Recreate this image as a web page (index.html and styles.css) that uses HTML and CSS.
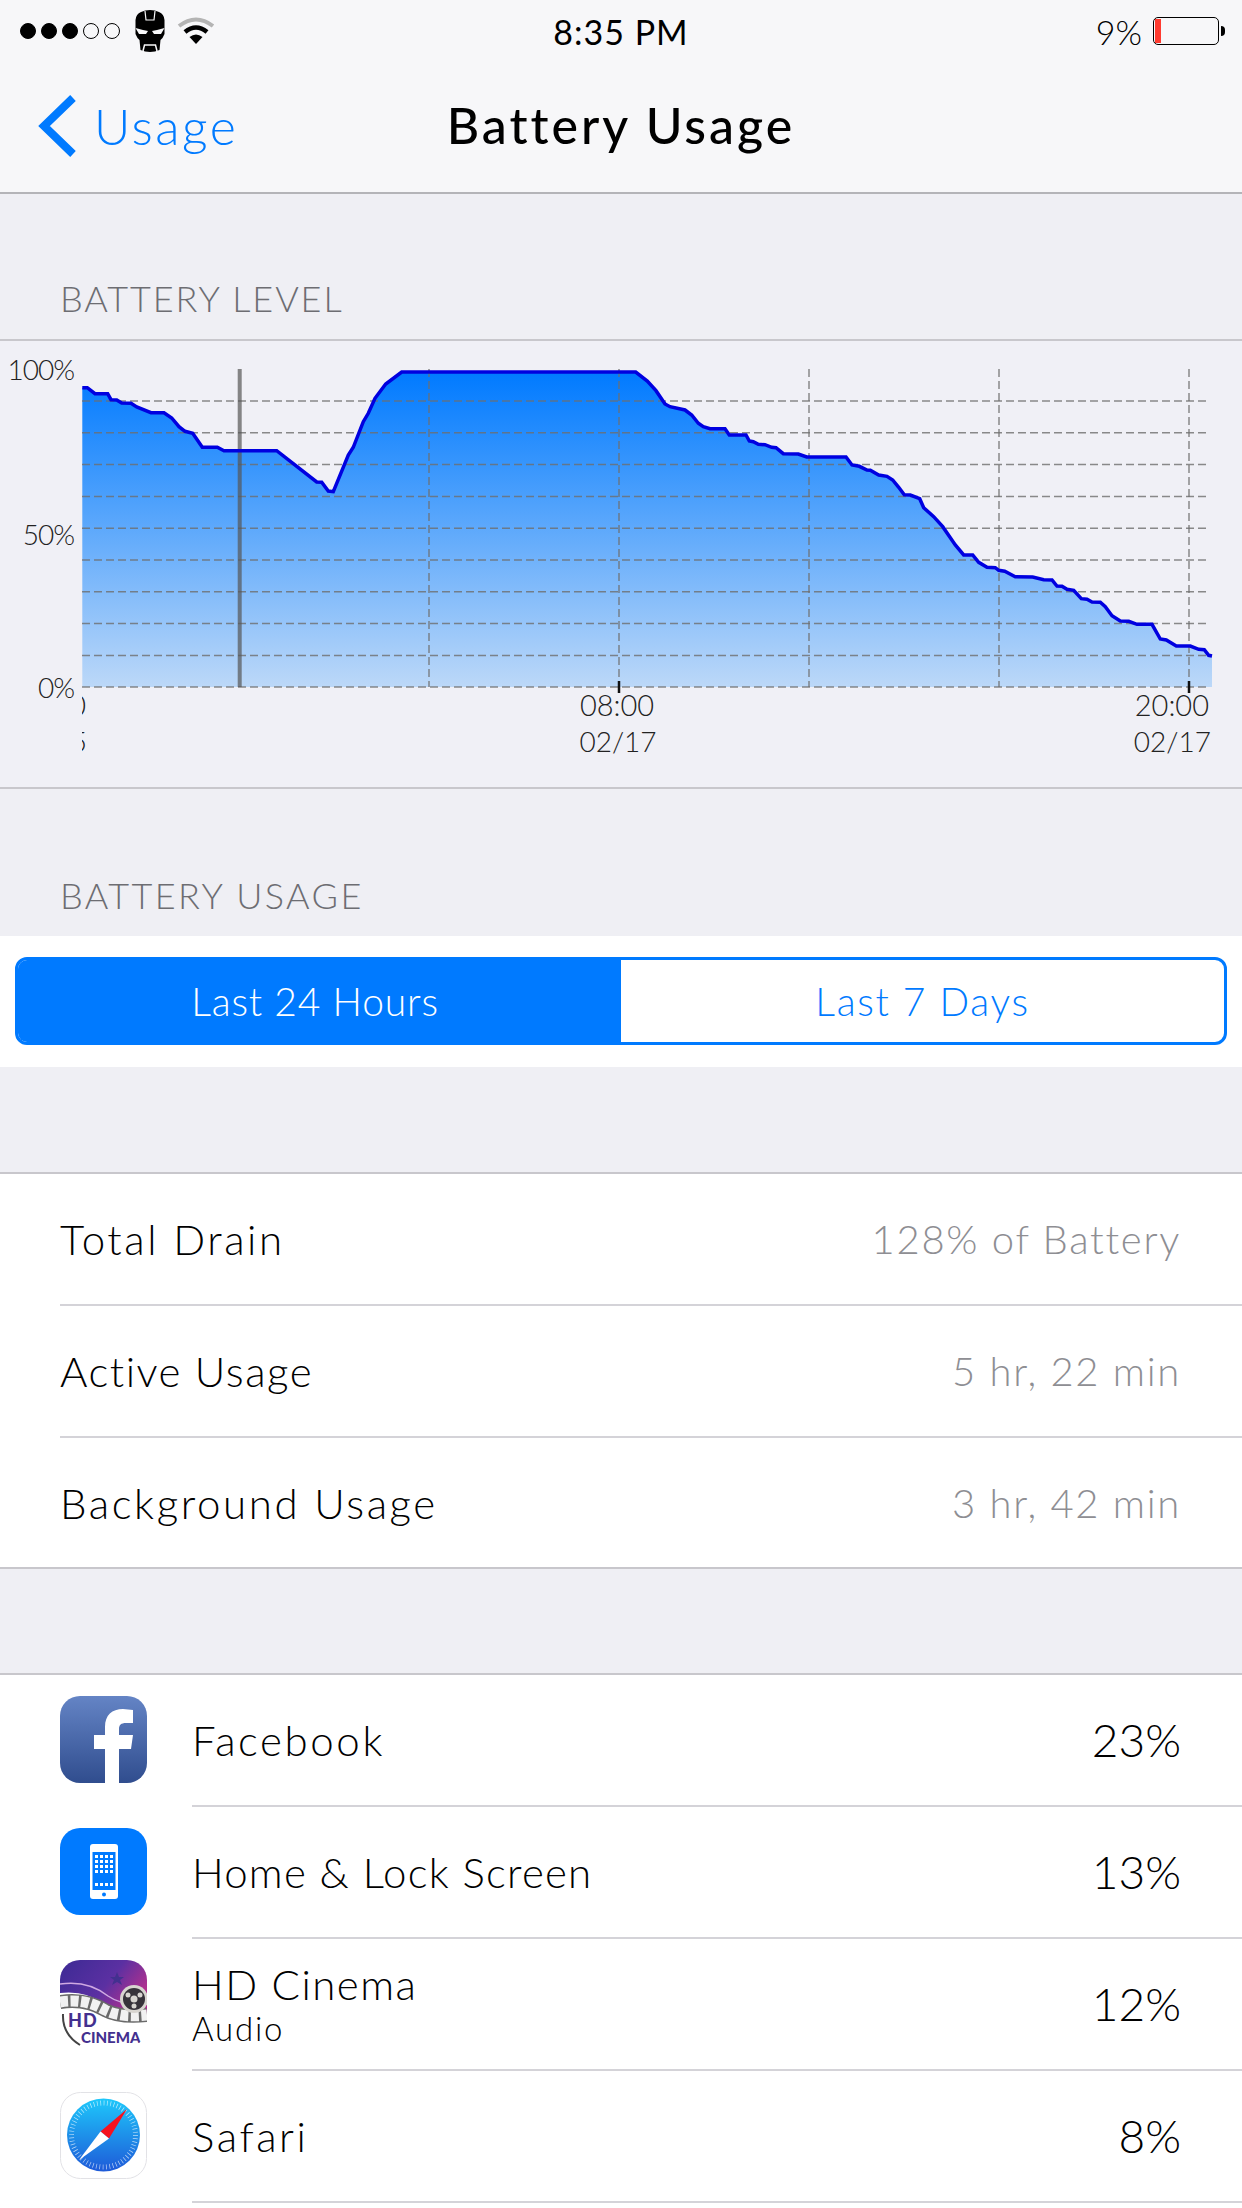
FILE: index.html
```html
<!DOCTYPE html>
<html lang="en">
<head>
    <meta charset="UTF-8">
    <meta name="viewport" content="width=device-width, initial-scale=1.0">
    <title>Battery Usage</title>
    <link rel="stylesheet" href="styles.css">
</head>
<body>
    <div class="screen">
        <!-- Status bar and navigation -->
        <header class="top-bar">
            <div class="status-bar">
                <div class="status-left">
                    <div class="signal">
                        <span class="dot on"></span><span class="dot on"></span><span class="dot on"></span><span class="dot"></span><span class="dot"></span>
                    </div>
                    <svg class="helmet" viewBox="0 0 30 42">
                        <path fill="#000" d="M6 2 Q10 0 15 0 Q20 0 24 2 Q29 4 29.5 10 V24 L27.5 28 L25.5 30 L24.5 40 Q20 42 15 42 Q10 42 5.5 40 L4.5 30 L2.5 28 L.5 24 V10 Q1 4 6 2Z"/>
                        <path fill="none" stroke="#f7f7f9" stroke-width="1.2" d="M10 1 L11 10 H19 L20 1"/>
                        <path fill="#f7f7f9" d="M.5 18 L8 20 L13 21 L11 24 L4 24 Z M29.5 18 L22 20 L17 21 L19 24 L26 24 Z"/>
                        <path fill="none" stroke="#f7f7f9" stroke-width="1.5" d="M8 41 L9.5 35 H20.5 L22 41"/>
                    </svg>
                    <svg class="wifi" viewBox="0 0 38 28">
                        <path fill="none" stroke="#b4b4b4" stroke-width="4" d="M2 10 Q19 -3 36 10"/>
                        <path fill="none" stroke="#000" stroke-width="4.5" d="M8 16 Q19 7 30 16"/>
                        <path fill="#000" d="M12.5 21 Q19 16 25.5 21 L19 28Z"/>
                    </svg>
                </div>
                <div class="status-time">8:35 PM</div>
                <div class="status-right">
                    <span class="status-percent">9%</span>
                    <div class="battery"><div class="battery-fill"></div></div>
                    <div class="battery-nub"></div>
                </div>
            </div>
            <div class="nav-row">
                <div class="nav-back">
                    <svg class="chevron" viewBox="0 0 40 64">
                        <path fill="none" stroke="#007aff" stroke-width="8" d="M36 4 L7 32 L36 60"/>
                    </svg>
                    <span>Usage</span>
                </div>
                <div class="nav-title">Battery Usage</div>
            </div>
        </header>

        <div class="section-label">BATTERY LEVEL</div>

        <!-- Battery level chart, coordinates are screen pixels -->
        <div class="chart-panel">
            <svg class="chart" viewBox="0 341 1242 446">
                <defs>
                    <linearGradient id="areaFill" x1="0" y1="0" x2="0" y2="1">
                        <stop offset="0" stop-color="#007aff"/>
                        <stop offset="1" stop-color="#bcd8f8"/>
                    </linearGradient>
                    <clipPath id="plotClip"><rect x="82" y="680" width="300" height="100"/></clipPath>
                </defs>
                <path fill="url(#areaFill)" d="M82.3 687 V387.7 L87.3 387.7 95 393.7 107.7 393.7 111 399.7 116.7 400 121.7 403 131 403.3 136.7 407 151 412.7 164 412.7 171.7 418 179 426.7 185 431.3 192.7 433.3 202.3 447.3 217.3 447.3 224 450.7 276.7 450.7 316.7 482 321.7 482.3 328.3 491 333.3 491.7 348.3 455 353.3 447.3 363.3 421.7 368.3 413.3 375 398.3 385.7 384 401.7 372 635.7 372 647.3 381 656 390.7 665 404 670 406.7 685 410 691.7 415 698.3 423.3 703.3 426.7 710 428.7 725 428.7 729.3 435 746 435 749.3 441 753.3 441.7 758.3 444.3 765 444.7 771.7 447.3 776 447.7 783.3 453.7 798.3 454 806.7 457 846 457 852 465 859.3 466.3 867 470 870.3 470.3 878.7 475 887 476.3 892.7 480 898.7 487.3 904.3 494.7 910.3 495 919.7 498.7 923.7 507.7 933.7 516.7 942.7 526.7 955.3 545 963.7 555 972.7 555 978.7 562.3 987 567.3 995.3 567.7 998.7 570.3 1004.7 571.3 1015.3 576.7 1032.7 577 1043.7 579.7 1052 580 1057 586 1062 586.3 1067 589.3 1073.7 590.3 1081.3 598.7 1087 599.3 1092 602 1100.3 602.3 1105.3 606.7 1112 615.7 1120.3 621 1128.7 621.3 1137 624.3 1152 624.3 1160.3 639 1166.3 640 1176.3 646 1190.3 646 1198.7 649.3 1204.3 649.7 1208.7 655.3 1212 656 V687 Z"/>
                <g class="grid-lines">
                    <path d="M82 401 H1207 M82 432.8 H1207 M82 464.6 H1207 M82 496.4 H1207 M82 528.2 H1207 M82 560 H1207 M82 591.8 H1207 M82 623.6 H1207 M82 655.4 H1207 M82 687 H1207"/>
                    <path d="M429 369 V687 M619 369 V687 M809 369 V687 M999 369 V687 M1189 369 V687"/>
                </g>
                <path class="cursor-line" d="M239.7 369 V687"/>
                <path class="level-line" d="M82.3 387.7 L87.3 387.7 95 393.7 107.7 393.7 111 399.7 116.7 400 121.7 403 131 403.3 136.7 407 151 412.7 164 412.7 171.7 418 179 426.7 185 431.3 192.7 433.3 202.3 447.3 217.3 447.3 224 450.7 276.7 450.7 316.7 482 321.7 482.3 328.3 491 333.3 491.7 348.3 455 353.3 447.3 363.3 421.7 368.3 413.3 375 398.3 385.7 384 401.7 372 635.7 372 647.3 381 656 390.7 665 404 670 406.7 685 410 691.7 415 698.3 423.3 703.3 426.7 710 428.7 725 428.7 729.3 435 746 435 749.3 441 753.3 441.7 758.3 444.3 765 444.7 771.7 447.3 776 447.7 783.3 453.7 798.3 454 806.7 457 846 457 852 465 859.3 466.3 867 470 870.3 470.3 878.7 475 887 476.3 892.7 480 898.7 487.3 904.3 494.7 910.3 495 919.7 498.7 923.7 507.7 933.7 516.7 942.7 526.7 955.3 545 963.7 555 972.7 555 978.7 562.3 987 567.3 995.3 567.7 998.7 570.3 1004.7 571.3 1015.3 576.7 1032.7 577 1043.7 579.7 1052 580 1057 586 1062 586.3 1067 589.3 1073.7 590.3 1081.3 598.7 1087 599.3 1092 602 1100.3 602.3 1105.3 606.7 1112 615.7 1120.3 621 1128.7 621.3 1137 624.3 1152 624.3 1160.3 639 1166.3 640 1176.3 646 1190.3 646 1198.7 649.3 1204.3 649.7 1208.7 655.3 1212 656"/>
                <path class="tick" d="M619 681 V693 M1189 681 V693"/>
                <text class="axis-text percent" x="74" y="380" text-anchor="end">100%</text>
                <text class="axis-text percent" x="74" y="545" text-anchor="end">50%</text>
                <text class="axis-text percent" x="74" y="698" text-anchor="end">0%</text>
                <g clip-path="url(#plotClip)">
                    <text class="axis-text" x="86" y="716" text-anchor="end">0</text>
                    <text class="axis-text date" x="87" y="752" text-anchor="end">5</text>
                </g>
                <text class="axis-text" x="617" y="716" text-anchor="middle">08:00</text>
                <text class="axis-text date" x="618" y="752" text-anchor="middle">02/17</text>
                <text class="axis-text" x="1209" y="716" text-anchor="end">20:00</text>
                <text class="axis-text date" x="1211" y="752" text-anchor="end">02/17</text>
            </svg>
        </div>

        <div class="section-label lower">BATTERY USAGE</div>

        <div class="segment-band">
            <div class="segmented">
                <div class="segment active">Last 24 Hours</div>
                <div class="segment">Last 7 Days</div>
            </div>
        </div>

        <!-- Totals -->
        <div class="table totals">
            <div class="row">
                <div class="row-body"><span class="row-name wide">Total Drain</span><span class="row-value">128% of Battery</span></div>
            </div>
            <div class="row">
                <div class="row-body"><span class="row-name">Active Usage</span><span class="row-value">5 hr, 22 min</span></div>
            </div>
            <div class="row">
                <div class="row-body"><span class="row-name wide">Background Usage</span><span class="row-value">3 hr, 42 min</span></div>
            </div>
        </div>

        <!-- Apps -->
        <div class="table apps">
            <div class="row">
                <svg class="app-icon" viewBox="0 0 87 87">
                    <defs>
                        <linearGradient id="fbFill" x1="0" y1="0" x2="0" y2="1">
                            <stop offset="0" stop-color="#6484c5"/>
                            <stop offset="1" stop-color="#304d8e"/>
                        </linearGradient>
                        <clipPath id="iconClip"><rect width="87" height="87" rx="20"/></clipPath>
                    </defs>
                    <rect width="87" height="87" rx="20" fill="url(#fbFill)"/>
                    <path fill="#fff" d="M45 87 V53 H34 V39 H45 V31 C45 19 52 13 63 13 L73 14 V27 H66 C61 27 59 29 59 33 V39 H73 L71 53 H59 V87 Z"/>
                </svg>
                <div class="row-body"><span class="row-name wide">Facebook</span><span class="row-percent">23%</span></div>
            </div>
            <div class="row">
                <svg class="app-icon" viewBox="0 0 87 87">
                    <rect width="87" height="87" rx="20" fill="#007aff"/>
                    <rect x="30" y="16" width="28" height="55" rx="3" fill="#fff"/>
                    <rect x="32.5" y="24" width="23" height="38" fill="#007aff"/>
                    <g fill="#fff">
                        <rect x="35" y="27" width="3" height="3"/><rect x="40" y="27" width="3" height="3"/><rect x="45" y="27" width="3" height="3"/><rect x="50" y="27" width="3" height="3"/>
                        <rect x="35" y="32" width="3" height="3"/><rect x="40" y="32" width="3" height="3"/><rect x="45" y="32" width="3" height="3"/><rect x="50" y="32" width="3" height="3"/>
                        <rect x="35" y="37" width="3" height="3"/><rect x="40" y="37" width="3" height="3"/><rect x="45" y="37" width="3" height="3"/><rect x="50" y="37" width="3" height="3"/>
                        <rect x="35" y="42" width="3" height="3"/><rect x="40" y="42" width="3" height="3"/><rect x="45" y="42" width="3" height="3"/><rect x="50" y="42" width="3" height="3"/>
                        <rect x="35" y="55" width="3" height="3"/><rect x="40" y="55" width="3" height="3"/><rect x="45" y="55" width="3" height="3"/><rect x="50" y="55" width="3" height="3"/>
                    </g>
                    <circle cx="44" cy="66.5" r="2" fill="#007aff"/>
                </svg>
                <div class="row-body"><span class="row-name narrow">Home &amp; Lock Screen</span><span class="row-percent">13%</span></div>
            </div>
            <div class="row">
                <svg class="app-icon" viewBox="0 0 87 87">
                    <defs>
                        <linearGradient id="cinemaFill" x1="0" y1="0" x2="1" y2="0.5">
                            <stop offset="0" stop-color="#3c2a94"/>
                            <stop offset="0.6" stop-color="#5b30a2"/>
                            <stop offset="1" stop-color="#b0318e"/>
                        </linearGradient>
                    </defs>
                    <g clip-path="url(#iconClip)">
                        <rect width="87" height="87" fill="#fff"/>
                        <path fill="url(#cinemaFill)" d="M0 0 H87 V54 Q60 56 45 44 Q25 30 0 33 Z"/>
                        <path fill="none" stroke="#cfa9e2" stroke-width="1.5" d="M0 24 Q28 20 48 36 Q62 46 87 44"/>
                        <path fill="none" stroke="#6a6a6a" stroke-width="14" d="M0 42 Q25 38 45 50 Q60 58 87 55"/>
                        <path fill="none" stroke="#f1f1f1" stroke-width="11" stroke-dasharray="8 2.5" d="M0 42 Q25 38 45 50 Q60 58 87 55"/>
                        <path fill="none" stroke="#444" stroke-width="2" d="M3 54 Q2 74 20 85"/>
                        <path fill="#43308f" d="M57 12 L59 17 L64 17 L60 20 L62 25 L57 22 L52 25 L54 20 L50 17 L55 17 Z"/>
                        <circle cx="74" cy="39" r="14" fill="#d8d5d0"/>
                        <circle cx="74" cy="39" r="11" fill="#37333a"/>
                        <circle cx="74" cy="39" r="3.5" fill="#d8d5d0"/>
                        <circle cx="68" cy="35" r="2.5" fill="#d8d5d0"/>
                        <circle cx="80" cy="35" r="2.5" fill="#d8d5d0"/>
                        <circle cx="74" cy="46" r="2.5" fill="#d8d5d0"/>
                        <text class="cinema-text" x="8" y="67">HD</text>
                        <text class="cinema-text small" x="21" y="83">CINEMA</text>
                    </g>
                </svg>
                <div class="row-body">
                    <div class="row-stack"><span class="row-name">HD Cinema</span><span class="row-sub">Audio</span></div>
                    <span class="row-percent">12%</span>
                </div>
            </div>
            <div class="row">
                <svg class="app-icon" viewBox="0 0 87 87">
                    <defs>
                        <linearGradient id="safariFill" x1="0" y1="0" x2="0" y2="1">
                            <stop offset="0" stop-color="#1ec8fb"/>
                            <stop offset="1" stop-color="#1e5ad8"/>
                        </linearGradient>
                    </defs>
                    <rect x=".5" y=".5" width="86" height="86" rx="20" fill="#fff" stroke="#e2e2e6"/>
                    <circle cx="43.5" cy="43" r="36.5" fill="url(#safariFill)"/>
                    <circle cx="43.5" cy="43" r="32" fill="none" stroke="#fff" stroke-opacity=".7" stroke-width="5" stroke-dasharray=".7 2.65"/>
                    <path fill="#f5121f" d="M67 17 L40.5 39.5 L49 46.5 Z"/>
                    <path fill="#fff" d="M19 68 L40.5 39.5 L49 46.5 Z"/>
                </svg>
                <div class="row-body"><span class="row-name wide">Safari</span><span class="row-percent">8%</span></div>
            </div>
        </div>
    </div>
</body>
</html>
```

FILE: styles.css
```css
/* Battery usage settings screen */
html, body {
    margin: 0;
    padding: 0;
}
body {
    font-family: "Lato", sans-serif;
    font-weight: 300;
    background-color: #efeff4;
    color: #000;
}
.screen {
    width: 1242px;
    height: 2208px;
    overflow: hidden;
    display: flex;
    flex-direction: column;
}

/* Top bar */
.top-bar {
    height: 194px;
    box-sizing: border-box;
    background-color: #f7f7f9;
    border-bottom: 2px solid #b4b4b8;
    flex-shrink: 0;
}
.status-bar {
    height: 62px;
    display: grid;
    grid-template-columns: 1fr auto 1fr;
    align-items: center;
}
.status-left {
    display: flex;
    align-items: center;
    padding-left: 20px;
}
.signal {
    display: flex;
    gap: 5px;
}
.dot {
    width: 16px;
    height: 16px;
    box-sizing: border-box;
    border: 1px solid #000;
    border-radius: 50%;
}
.dot.on {
    background-color: #000;
}
.helmet {
    width: 30px;
    height: 42px;
    margin-left: 15px;
}
.wifi {
    width: 38px;
    height: 28px;
    margin-left: 12px;
    margin-top: -2px;
}
.status-time {
    font-size: 34px;
    font-weight: 400;
    letter-spacing: 1px;
}
.status-right {
    display: flex;
    align-items: center;
    justify-content: flex-end;
    padding-right: 17px;
}
.status-percent {
    font-size: 34px;
    margin-right: 11px;
}
.battery {
    width: 66px;
    height: 28px;
    box-sizing: border-box;
    border: 1.5px solid #000;
    border-radius: 5px;
    padding: 1px;
}
.battery-fill {
    width: 6px;
    height: 100%;
    background-color: #ff3b30;
}
.battery-nub {
    width: 4px;
    height: 10px;
    margin-left: 2px;
    background-color: #000;
    border-radius: 0 4px 4px 0;
}
.nav-row {
    height: 130px;
    position: relative;
    display: flex;
    align-items: center;
    justify-content: center;
}
.nav-back {
    position: absolute;
    left: 37px;
    top: 32px;
    display: flex;
    align-items: center;
    gap: 17px;
    color: #007aff;
    font-size: 50px;
    letter-spacing: 2.5px;
}
.chevron {
    width: 40px;
    height: 64px;
}
.nav-title {
    font-size: 50px;
    font-weight: 500;
    letter-spacing: 3px;
    margin-top: -4px;
}

/* Section headers */
.section-label {
    height: 145px;
    box-sizing: border-box;
    padding: 0 0 21px 60px;
    display: flex;
    align-items: flex-end;
    font-size: 36px;
    line-height: 40px;
    color: #6d6d72;
    letter-spacing: 1.9px;
    flex-shrink: 0;
}
.section-label.lower {
    height: 147px;
    letter-spacing: 2.4px;
}

/* Chart */
.chart-panel {
    height: 450px;
    box-sizing: border-box;
    border-top: 2px solid #c8c7cc;
    border-bottom: 2px solid #c8c7cc;
    background-color: #f0f0f6;
    flex-shrink: 0;
}
.chart {
    display: block;
    width: 1242px;
    height: 446px;
}
.grid-lines path {
    fill: none;
    stroke: #6e6e6e;
    stroke-opacity: .8;
    stroke-width: 1.5;
    stroke-dasharray: 8 4;
}
.cursor-line {
    fill: none;
    stroke: #555;
    stroke-opacity: .7;
    stroke-width: 4;
}
.level-line {
    fill: none;
    stroke: #0000e0;
    stroke-width: 3.5;
}
.tick {
    fill: none;
    stroke: #111;
    stroke-width: 2.5;
}
.axis-text {
    font-family: "Lato", sans-serif;
    font-weight: 300;
    font-size: 29px;
    fill: #222;
}
.axis-text.percent {
    font-size: 28px;
    letter-spacing: -1px;
}
.axis-text.date {
    font-size: 28px;
}
.cinema-text {
    font-family: "Lato", sans-serif;
    font-weight: 900;
    font-size: 18px;
    letter-spacing: 1px;
    fill: #43308f;
}
.cinema-text.small {
    font-size: 15px;
    letter-spacing: 0;
}

/* Segmented control */
.segment-band {
    height: 131px;
    box-sizing: border-box;
    padding: 21px 15px 22px 15px;
    background-color: #fff;
    flex-shrink: 0;
}
.segmented {
    display: grid;
    grid-template-columns: 1fr 1fr;
    height: 88px;
    box-sizing: border-box;
    border: 3px solid #007aff;
    border-radius: 12px;
    overflow: hidden;
}
.segment {
    display: flex;
    align-items: center;
    justify-content: center;
    font-size: 39px;
    letter-spacing: 1.7px;
    color: #007aff;
}
.segment.active {
    background-color: #007aff;
    color: #fff;
    letter-spacing: .8px;
    padding-right: 9px;
}

/* Tables */
.table {
    margin-top: 105px;
    background-color: #fff;
    border-top: 2px solid #c8c7cc;
    flex-shrink: 0;
}
.totals {
    border-bottom: 2px solid #c8c7cc;
}
.apps {
    margin-top: 104px;
    flex-grow: 1;
}
.row {
    display: flex;
    align-items: center;
    height: 132px;
    padding-left: 60px;
}
.row-body {
    flex: 1;
    align-self: stretch;
    display: flex;
    align-items: center;
    justify-content: space-between;
    padding-right: 61px;
    border-bottom: 2px solid #d4d3d8;
}
.totals .row:last-child {
    height: 129px;
}
.totals .row:last-child .row-body {
    border-bottom: none;
}
.app-icon {
    width: 87px;
    height: 87px;
    margin: 0 45px 3px 0;
    flex-shrink: 0;
}
.row-name {
    font-size: 42px;
    letter-spacing: 1.5px;
}
.row-name.wide {
    letter-spacing: 2.6px;
}
.row-name.narrow {
    letter-spacing: 1.2px;
}
.row-value {
    font-size: 40px;
    letter-spacing: 1.7px;
    color: #8e8e93;
}
.row-percent {
    font-size: 46px;
    margin-top: -2px;
}
.row-stack {
    display: flex;
    flex-direction: column;
    margin-top: 4px;
}
.row-stack .row-name {
    line-height: 44px;
}
.row-sub {
    font-size: 33px;
    line-height: 44px;
    letter-spacing: 1.8px;
}
```
